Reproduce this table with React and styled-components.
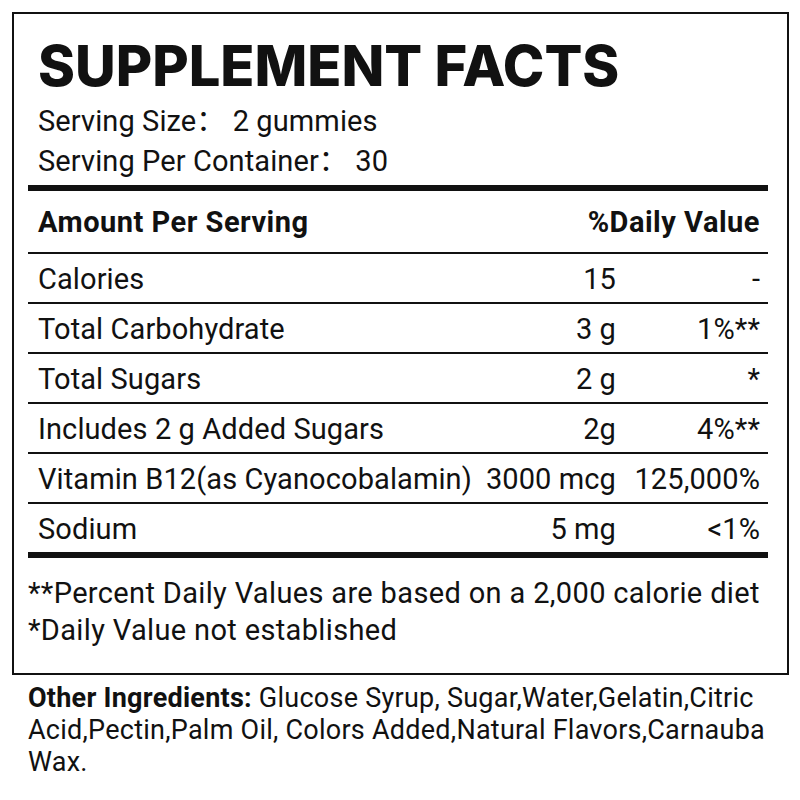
import React from "react";
import styled, { createGlobalStyle } from "styled-components";

const Global = createGlobalStyle`
  html, body { margin: 0; padding: 0; background: #fff; }
  body { font-family: Roboto, "Noto Sans CJK SC", sans-serif; color: #111; }
`;

const Page = styled.div`
  width: 800px;
  height: 800px;
  padding: 12px 0 0 12px;
  box-sizing: border-box;
`;

const Panel = styled.section`
  width: 777px;
  height: 663px;
  box-sizing: border-box;
  border: 2px solid #111;
  padding: 0 19px 0 14px;
`;

const Title = styled.h1`
  margin: 0;
  padding: 18px 0 0 10px;
  font-family: Inter, sans-serif;
  font-weight: 800;
  font-size: 56px;
  line-height: 68px;
`;

const ServingBlock = styled.div`
  padding: 1px 0 4px 10px;
`;

const ServingLine = styled.div`
  font-size: 29px;
  line-height: 40px;
  letter-spacing: 0.1px;
`;

const Rule = styled.div`
  height: ${(p) => p.$h}px;
  background: #111;
`;

const Row = styled.div`
  display: grid;
  grid-template-columns: 1fr 140px 144px;
  align-items: center;
  height: ${(p) => p.$h || 47}px;
  box-sizing: content-box;
  padding: 3px 8px 0 10px;
  margin-top: -2px;
  border-bottom: ${(p) => (p.$last ? "none" : "2px solid #111")};
  font-size: 29px;
  font-weight: ${(p) => (p.$bold ? 700 : 400)};
  letter-spacing: ${(p) => (p.$bold ? "0.5px" : "0.1px")};
`;

const Cell = styled.span`
  text-align: ${(p) => (p.$right ? "right" : "left")};
  white-space: nowrap;
  grid-column: ${(p) => p.$span || "auto"};
`;

const Notes = styled.div`
  padding-top: 17px;
  font-size: 29px;
  line-height: 37px;
  letter-spacing: 0.35px;
`;

const Ingredients = styled.p`
  margin: 0;
  padding: 7px 28px 0 16px;
  font-size: 27px;
  line-height: 32px;
  letter-spacing: 0.25px;
`;

const Strong = styled.b`
  font-weight: 700;
`;

const rows = [
  ["Calories", "15", "-"],
  ["Total Carbohydrate", "3 g", "1%**"],
  ["Total Sugars", "2 g", "*"],
  ["Includes 2 g Added Sugars", "2g", "4%**"],
  ["Vitamin B12(as Cyanocobalamin)", "3000 mcg", "125,000%"],
  ["Sodium", "5 mg", "<1%"],
];

export default function App() {
  return (
    <>
      <Global />
      <Page>
        <Panel>
          <Title>SUPPLEMENT FACTS</Title>
          <ServingBlock>
            <ServingLine>Serving Size：&nbsp;2 gummies</ServingLine>
            <ServingLine>Serving Per Container：&nbsp;30</ServingLine>
          </ServingBlock>
          <Rule $h={6} />
          <Row $bold $h={60}>
            <Cell>Amount Per Serving</Cell>
            <Cell $right $span="2 / 4">%Daily Value</Cell>
          </Row>
          {rows.map((r, i) => (
            <Row key={r[0]} $last={i === rows.length - 1}>
              <Cell>{r[0]}</Cell>
              <Cell $right>{r[1]}</Cell>
              <Cell $right>{r[2]}</Cell>
            </Row>
          ))}
          <Rule $h={6} />
          <Notes>
            **Percent Daily Values are based on a 2,000 calorie diet
            <br />
            *Daily Value not established
          </Notes>
        </Panel>
        <Ingredients>
          <Strong>Other Ingredients:</Strong> Glucose Syrup, Sugar,Water,Gelatin,Citric
          Acid,Pectin,Palm Oil, Colors Added,Natural Flavors,Carnauba Wax.
        </Ingredients>
      </Page>
    </>
  );
}
